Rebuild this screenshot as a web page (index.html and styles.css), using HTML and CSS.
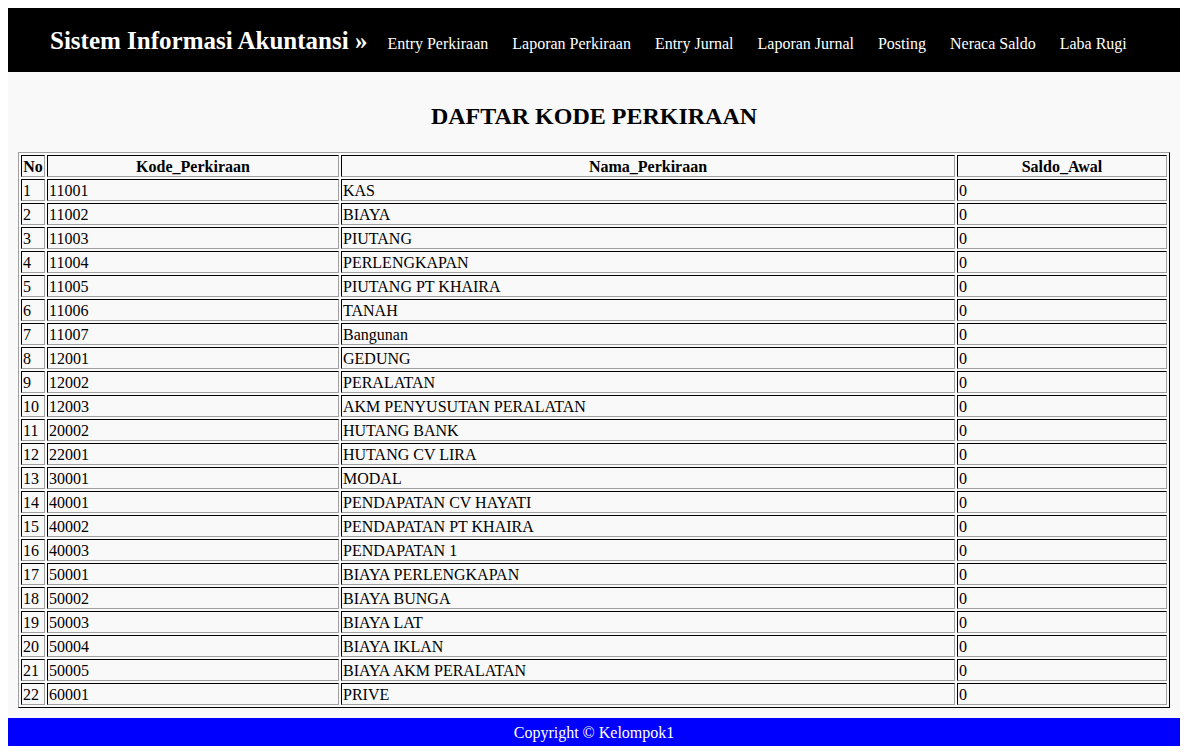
FILE: index.html
```html
<!DOCTYPE html>
<html>
<head>
<meta charset="utf-8">
<title>Daftar Kode Perkiraan</title>
<link rel="stylesheet" href="styles.css">
</head>
<body>
<div class="header">
  <span class="brand">Sistem Informasi Akuntansi »</span>
  <ul class="nav">
    <li><a href="#">Entry Perkiraan</a></li>
    <li><a href="#">Laporan Perkiraan</a></li>
    <li><a href="#">Entry Jurnal</a></li>
    <li><a href="#">Laporan Jurnal</a></li>
    <li><a href="#">Posting</a></li>
    <li><a href="#">Neraca Saldo</a></li>
    <li><a href="#">Laba Rugi</a></li>
  </ul>
</div>
<div class="content">
  <h2 class="title">DAFTAR KODE PERKIRAAN</h2>
  <table class="data" border="1" cellspacing="2" cellpadding="1">
    <thead>
      <tr><th class="c-no">No</th><th class="c-kode">Kode_Perkiraan</th><th class="c-nama">Nama_Perkiraan</th><th class="c-saldo">Saldo_Awal</th></tr>
    </thead>
    <tbody>
      <tr><td>1</td><td>11001</td><td>KAS</td><td>0</td></tr>
      <tr><td>2</td><td>11002</td><td>BIAYA</td><td>0</td></tr>
      <tr><td>3</td><td>11003</td><td>PIUTANG</td><td>0</td></tr>
      <tr><td>4</td><td>11004</td><td>PERLENGKAPAN</td><td>0</td></tr>
      <tr><td>5</td><td>11005</td><td>PIUTANG PT KHAIRA</td><td>0</td></tr>
      <tr><td>6</td><td>11006</td><td>TANAH</td><td>0</td></tr>
      <tr><td>7</td><td>11007</td><td>Bangunan</td><td>0</td></tr>
      <tr><td>8</td><td>12001</td><td>GEDUNG</td><td>0</td></tr>
      <tr><td>9</td><td>12002</td><td>PERALATAN</td><td>0</td></tr>
      <tr><td>10</td><td>12003</td><td>AKM PENYUSUTAN PERALATAN</td><td>0</td></tr>
      <tr><td>11</td><td>20002</td><td>HUTANG BANK</td><td>0</td></tr>
      <tr><td>12</td><td>22001</td><td>HUTANG CV LIRA</td><td>0</td></tr>
      <tr><td>13</td><td>30001</td><td>MODAL</td><td>0</td></tr>
      <tr><td>14</td><td>40001</td><td>PENDAPATAN CV HAYATI</td><td>0</td></tr>
      <tr><td>15</td><td>40002</td><td>PENDAPATAN PT KHAIRA</td><td>0</td></tr>
      <tr><td>16</td><td>40003</td><td>PENDAPATAN 1</td><td>0</td></tr>
      <tr><td>17</td><td>50001</td><td>BIAYA PERLENGKAPAN</td><td>0</td></tr>
      <tr><td>18</td><td>50002</td><td>BIAYA BUNGA</td><td>0</td></tr>
      <tr><td>19</td><td>50003</td><td>BIAYA LAT</td><td>0</td></tr>
      <tr><td>20</td><td>50004</td><td>BIAYA IKLAN</td><td>0</td></tr>
      <tr><td>21</td><td>50005</td><td>BIAYA AKM PERALATAN</td><td>0</td></tr>
      <tr><td>22</td><td>60001</td><td>PRIVE</td><td>0</td></tr>
    </tbody>
  </table>
</div>
<div class="footer">Copyright © Kelompok1</div>
</body>
</html>
```

FILE: styles.css
```css
html, body {
  background: #ffffff;
}
body {
  margin: 8px;
  font-family: "Liberation Serif", "Times New Roman", serif;
  font-size: 16px;
  color: #000;
}
.header {
  background: #000;
  height: 64px;
  display: flex;
  align-items: center;
  padding-left: 42px;
}
.brand {
  color: #fff;
  font-weight: bold;
  font-size: 25px;
  margin-right: 20px;
  position: relative;
  top: 1px;
}
.nav {
  list-style: none;
  margin: 0;
  padding: 0;
  display: flex;
  gap: 24px;
  position: relative;
  top: 4px;
}
.nav a {
  color: #fff;
  text-decoration: none;
  font-size: 16px;
}
.content {
  background: #f9f9f9;
  padding: 10px 10px 10px 10px;
}
.title {
  text-align: center;
  font-size: 24px;
  font-weight: bold;
  margin: 21px 0 22px;
}
.data {
  width: 100%;
  border-color: #a0a0a0 #555 #555 #a0a0a0;
}
.data th, .data td {
  border-color: #555 #a0a0a0 #a0a0a0 #555;
  line-height: 18px;
  padding: 2px 1px 0 1px;
}
.data td { text-align: left; }
.c-no { width: 20px; }
.c-kode { width: 288px; }
.c-nama { width: 610px; }
.footer {
  background: #0000ff;
  color: #fff;
  text-align: center;
  height: 28px;
  line-height: 30px;
  font-size: 16px;
}
```
